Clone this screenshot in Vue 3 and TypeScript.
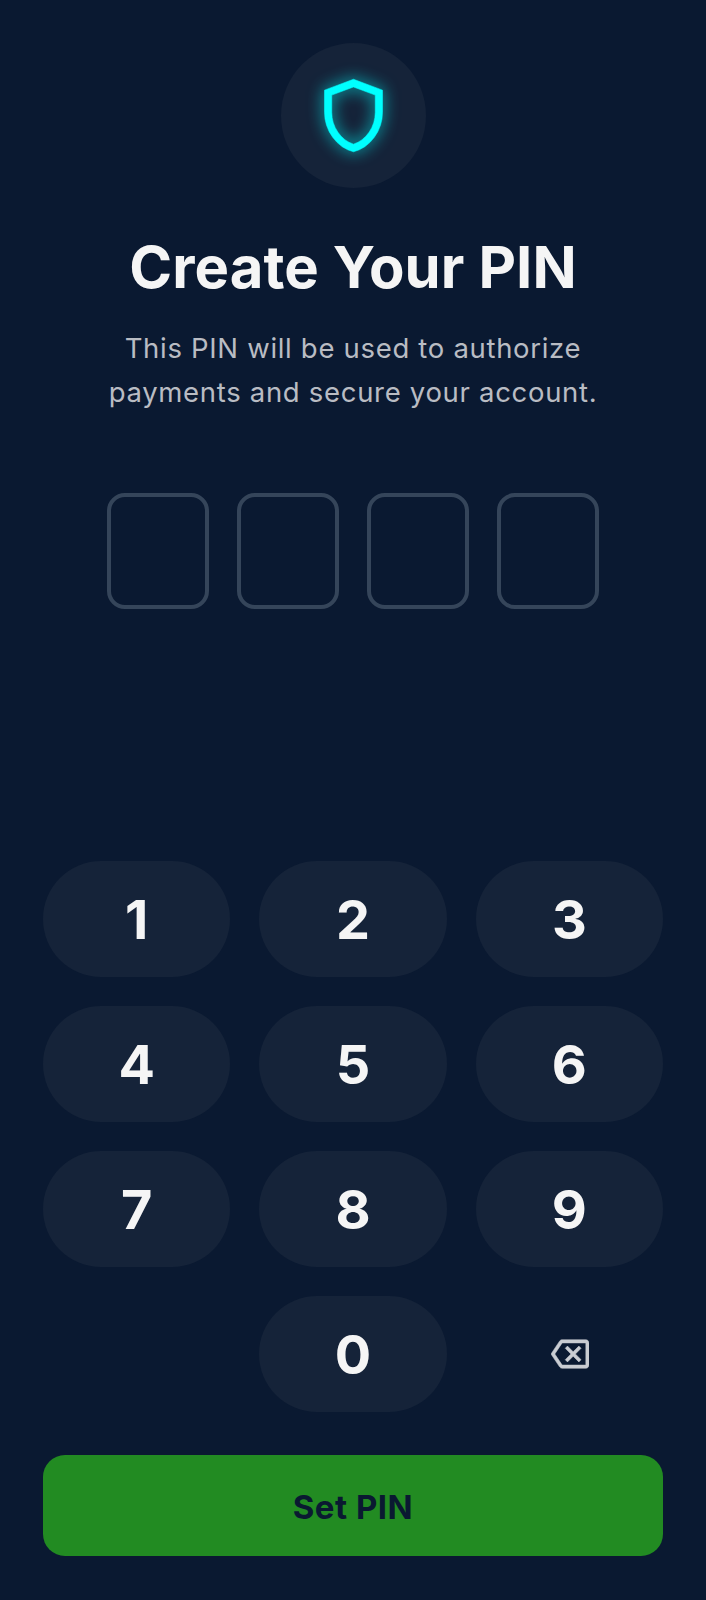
<script setup lang="ts">
const keys: string[] = ['1', '2', '3', '4', '5', '6', '7', '8', '9'];
const slots: number[] = [0, 1, 2, 3];
</script>

<template>
  <main class="screen">
    <div class="badge">
      <svg class="shield" viewBox="0 0 24 24" width="87" height="87" aria-hidden="true">
        <path d="M12 22q-3.475-.875-5.738-3.988T4 11.1V5l8-3 8 3v6.1q0 3.8-2.262 6.913T12 22Zm0-2.1q2.6-.825 4.3-3.3t1.7-5.5V6.375l-6-2.25-6 2.25V11.1q0 3.025 1.7 5.5t4.3 3.3Z" />
      </svg>
    </div>
    <h1 class="title">Create Your PIN</h1>
    <p class="subtitle">This PIN will be used to authorize<br />payments and secure your account.</p>
    <div class="slots">
      <div v-for="s in slots" :key="s" class="slot"></div>
    </div>
    <div class="keypad">
      <button v-for="k in keys" :key="k" class="key">{{ k }}</button>
      <span></span>
      <button class="key">0</button>
      <button class="key ghost" aria-label="Backspace">
        <svg viewBox="0 0 24 24" width="38" height="38" aria-hidden="true">
          <path d="M22 3H7c-.69 0-1.23.35-1.59.88L0 12l5.41 8.11c.36.53.9.89 1.59.89h15c1.1 0 2-.9 2-2V5c0-1.1-.9-2-2-2zm0 16H7.07L2.4 12l4.66-7H22v14zM10.41 17 14 13.41 17.59 17 19 15.59 15.41 12 19 8.41 17.59 7 14 10.59 10.41 7 9 8.41 12.59 12 9 15.59z" />
        </svg>
      </button>
    </div>
    <button class="submit">Set PIN</button>
  </main>
</template>

<style>
html, body { margin: 0; background: #0a1931; }
</style>

<style scoped>
.screen {
  box-sizing: border-box;
  width: 706px;
  height: 1600px;
  padding: 43px 43px 44px;
  background: #0a1931;
  display: flex;
  flex-direction: column;
  align-items: center;
  font-family: Inter, "Liberation Sans", sans-serif;
}
.badge {
  width: 145px;
  height: 145px;
  border-radius: 50%;
  background: #152339;
  display: flex;
  align-items: center;
  justify-content: center;
  flex: none;
}
.shield {
  fill: #00ffff;
  stroke: #00ffff;
  stroke-width: 0.15;
  filter: drop-shadow(0 0 8px rgba(0, 255, 255, 0.75));
}
.title {
  margin: 44px 0 0;
  font-size: 58px;
  line-height: 70px;
  font-weight: 700;
  letter-spacing: 0.1px;
  color: #f5f5f5;
  text-align: center;
}
.subtitle {
  margin: 25px 0 0;
  font-size: 27.5px;
  line-height: 43.5px;
  font-weight: 400;
  letter-spacing: 0.69px;
  color: #b9bcc3;
  text-align: center;
}
.slots {
  margin-top: 79px;
  display: flex;
  gap: 28.5px;
}
.slot {
  box-sizing: border-box;
  width: 101.5px;
  height: 116px;
  border: 4px solid #35455a;
  border-radius: 18px;
}
.keypad {
  margin-top: auto;
  width: 100%;
  display: grid;
  grid-template-columns: repeat(3, 1fr);
  column-gap: 29px;
  row-gap: 29px;
}
.key {
  height: 116px;
  border: 0;
  border-radius: 58px;
  background: #152339;
  color: #f5f5f5;
  font-family: inherit;
  font-size: 54px;
  font-weight: 700;
  padding: 0;
  display: flex;
  align-items: center;
  justify-content: center;
}
.ghost {
  background: transparent;
  padding-left: 2px;
}
.ghost svg {
  fill: #c9ccd2;
  stroke: #c9ccd2;
  stroke-width: 0.35;
}
.submit {
  margin-top: 43px;
  width: 100%;
  height: 101px;
  border: 0;
  border-radius: 22px;
  background: #228b22;
  color: #0a1931;
  font-family: inherit;
  font-size: 33px;
  line-height: 104px;
  font-weight: 700;
  letter-spacing: 0.5px;
  padding: 0;
  flex: none;
}
</style>
